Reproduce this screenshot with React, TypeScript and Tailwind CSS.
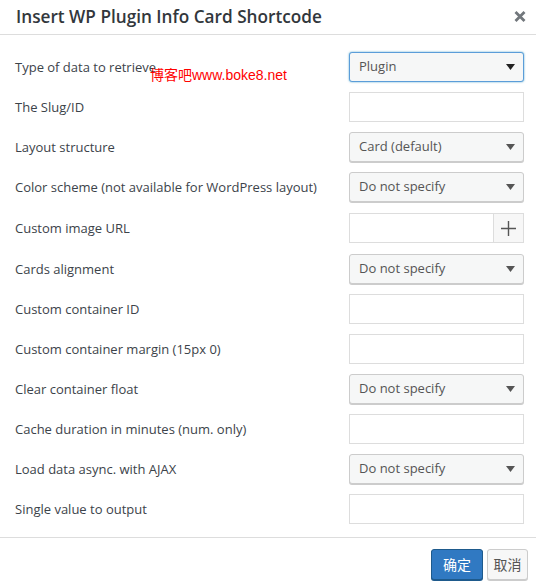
import React from 'react';

type Field = {
  label: string;
  kind: 'select' | 'input' | 'image';
  value?: string;
  focused?: boolean;
};

const fields: Field[] = [
  { label: 'Type of data to retrieve', kind: 'select', value: 'Plugin', focused: true },
  { label: 'The Slug/ID', kind: 'input' },
  { label: 'Layout structure', kind: 'select', value: 'Card (default)' },
  { label: 'Color scheme (not available for WordPress layout)', kind: 'select', value: 'Do not specify' },
  { label: 'Custom image URL', kind: 'image' },
  { label: 'Cards alignment', kind: 'select', value: 'Do not specify' },
  { label: 'Custom container ID', kind: 'input' },
  { label: 'Custom container margin (15px 0)', kind: 'input' },
  { label: 'Clear container float', kind: 'select', value: 'Do not specify' },
  { label: 'Cache duration in minutes (num. only)', kind: 'input' },
  { label: 'Load data async. with AJAX', kind: 'select', value: 'Do not specify' },
  { label: 'Single value to output', kind: 'input' },
];

function Arrow({ dark }: { dark?: boolean }) {
  return (
    <svg width="9" height="6" viewBox="0 0 9 6" className={dark ? 'text-[#222]' : 'text-[#555]'}>
      <path d="M0 0h9L4.5 6z" fill="currentColor" />
    </svg>
  );
}

function Control({ field }: { field: Field }) {
  if (field.kind === 'select') {
    return (
      <div
        className={`flex h-[30px] w-[175px] items-center justify-between rounded-[3px] border bg-[#f6f7f7] pl-[9px] pr-[8px] text-[13px] text-[#555] ${
          field.focused
            ? 'border-[#5b9dd9] shadow-[0_0_2px_rgba(30,140,190,0.8)]'
            : 'border-[#ccc] shadow-[0_1px_0_#ccc]'
        }`}
      >
        <span>{field.value}</span>
        <Arrow dark={field.focused} />
      </div>
    );
  }
  if (field.kind === 'image') {
    return (
      <div className="flex h-[30px] w-[175px]">
        <div className="h-full flex-1 border border-[#ddd] bg-white" />
        <div className="flex h-full w-[30px] items-center justify-center border border-l-0 border-[#ddd] bg-[#f7f7f7]">
          <svg width="15" height="15" viewBox="0 0 15 15" className="text-[#555]">
            <path d="M7.5 0v15M0 7.5h15" stroke="currentColor" strokeWidth="1.4" />
          </svg>
        </div>
      </div>
    );
  }
  return <div className="h-[30px] w-[175px] border border-[#ddd] bg-white" />;
}

export default function App() {
  return (
    <div
      className="relative h-[585px] w-[536px] overflow-hidden bg-white text-[#32373c]"
      style={{ fontFamily: '"Segoe UI", "Open Sans", "Noto Sans CJK SC", sans-serif' }}
    >
      {/* header */}
      <div className="flex h-[35px] items-center justify-between border-b border-[#ddd] pl-[16px] pr-[10px]">
        <h1 className="text-[17.2px] font-semibold text-[#32373c]">Insert WP Plugin Info Card Shortcode</h1>
        <svg width="12" height="11" viewBox="0 0 12 11" className="mb-[2px] text-[#72777c]">
          <path d="M1.5 1l9 9M10.5 1l-9 9" stroke="currentColor" strokeWidth="2.8" />
        </svg>
      </div>

      {/* fields */}
      <div className="pt-[12px] pb-[8px] pl-[15px] pr-[12px]">
        {fields.map((f) => (
          <div
            key={f.label}
            className={`flex items-center justify-between ${f.kind === 'image' ? 'h-[42px]' : 'h-[40px]'}`}
          >
            <span className="pt-[2px] text-[13px] text-[#3c434a]">{f.label}</span>
            <Control field={f} />
          </div>
        ))}
      </div>

      {/* footer */}
      <div className="flex justify-end gap-[4px] border-t border-[#ddd] pt-[11px] pr-[8px]">
        <button className="h-[31px] w-[52px] rounded-[3px] border border-[#1e5a8c] bg-[#3079c2] text-[14px] text-white shadow-[0_1px_0_#1e5a8c]">
          确定
        </button>
        <button className="h-[31px] w-[41px] rounded-[3px] border border-[#ccc] bg-[#f7f7f7] text-[14px] text-[#555] shadow-[0_1px_0_#ccc]">
          取消
        </button>
      </div>

      {/* watermark */}
      <span
        className="absolute left-[150px] top-[68px] text-[14px] leading-none text-[#f00]"
        style={{ fontFamily: '"Liberation Sans", "Noto Sans CJK SC", sans-serif' }}
      >
        博客吧www.boke8.net
      </span>
    </div>
  );
}
